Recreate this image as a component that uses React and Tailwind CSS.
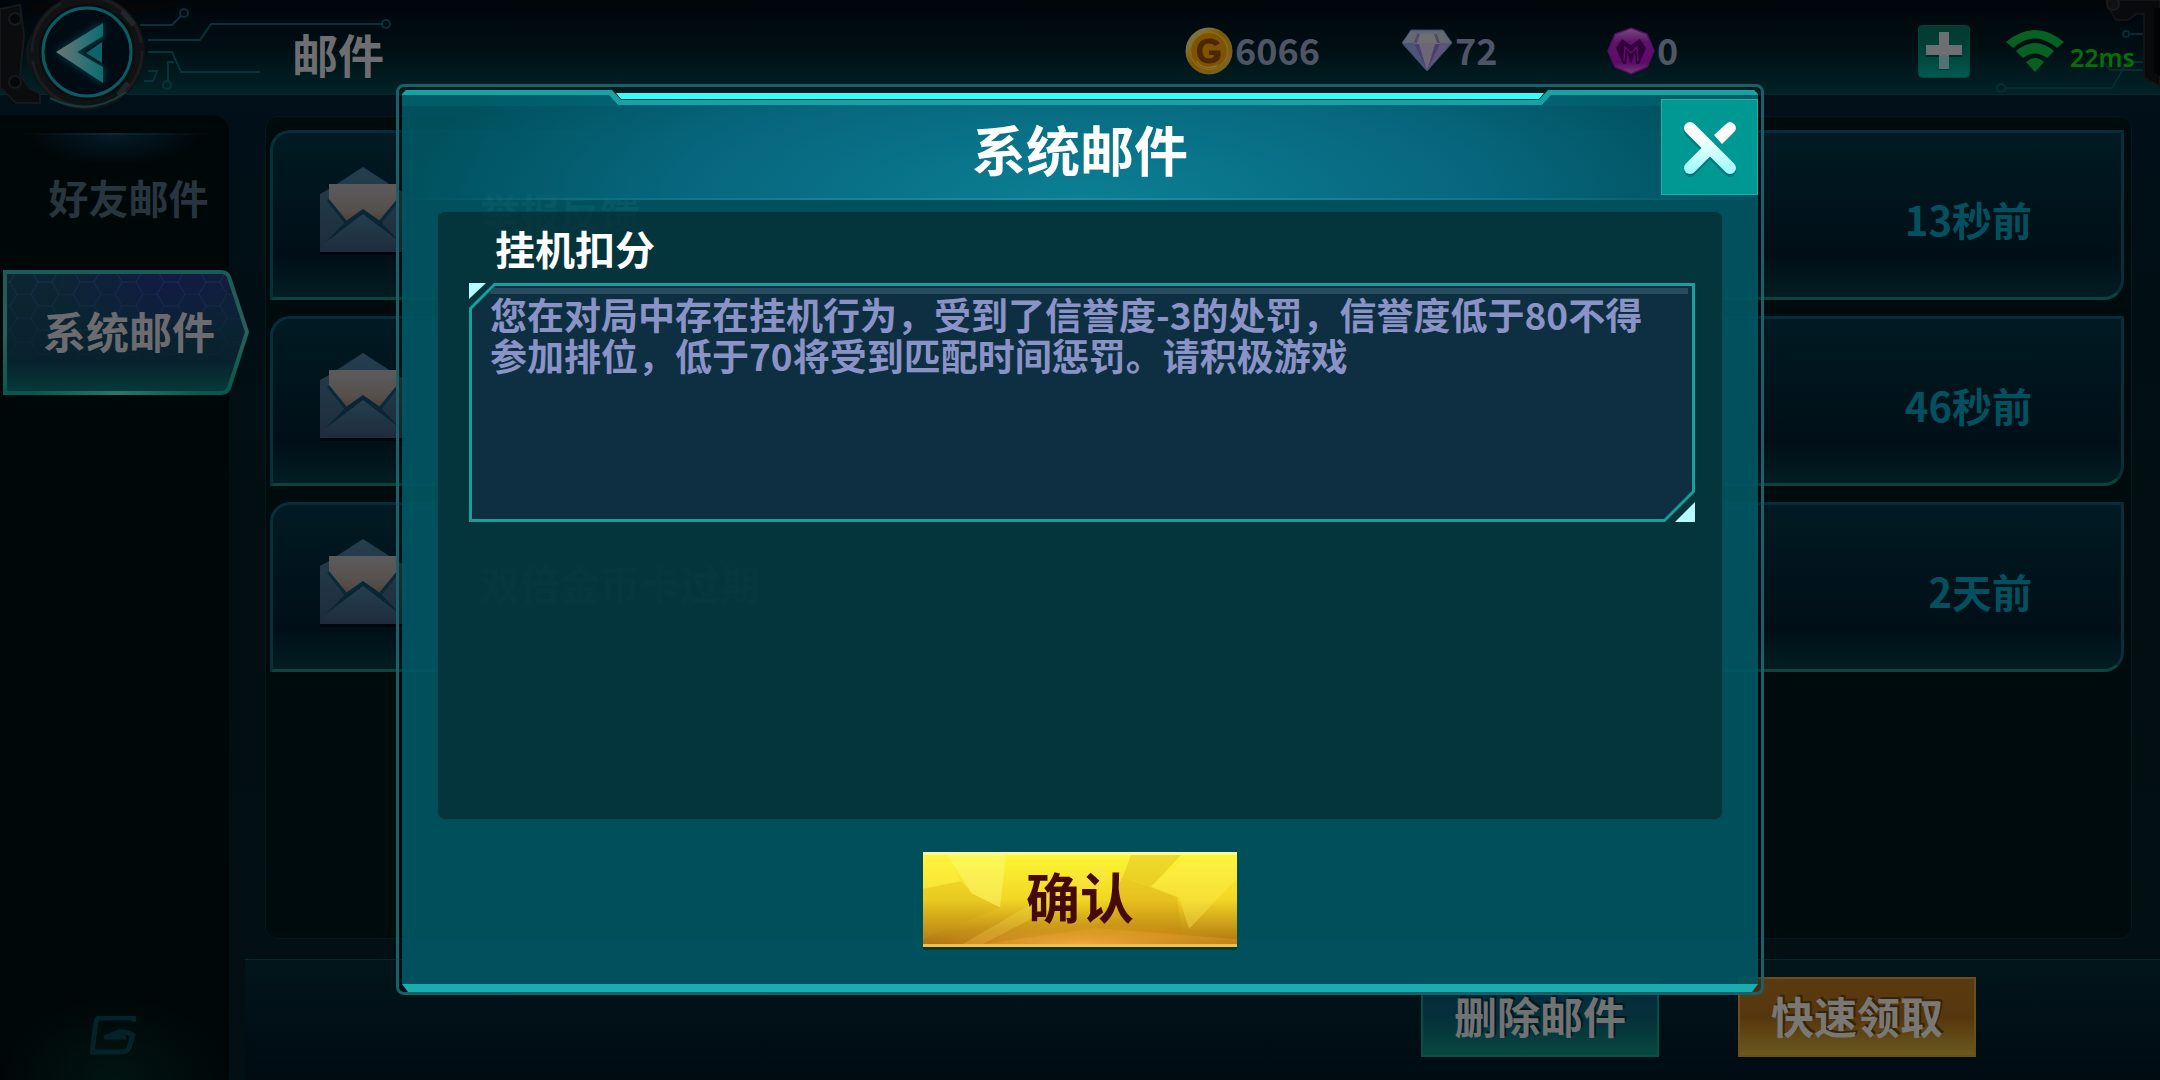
const currencies = [
  { id: "coin", label: "金币", value: "6066", Icon: CoinIcon, width: "w-[216px]" },
  { id: "diamond", label: "钻石", value: "72", Icon: DiamondIcon, width: "w-[206px]" },
  { id: "medal", label: "勋章", value: "0", Icon: MedalIcon, width: "w-[311px]" },
];

const mails = [
  { id: 1, title: "举报反馈", time: "13秒前" },
  { id: 2, title: "", time: "46秒前" },
  { id: 3, title: "双倍金币卡过期", time: "2天前" },
];

function CoinIcon() {
  return (
    <svg width="48" height="48" viewBox="0 0 48 48" aria-hidden="true">
      <defs>
        <linearGradient id="coin-rim" x1="0" y1="0" x2="1" y2="1">
          <stop offset="0" stopColor="#8a6a10" />
          <stop offset=".2" stopColor="#7d7245" />
          <stop offset=".45" stopColor="#7c5605" />
          <stop offset=".85" stopColor="#7a6228" />
          <stop offset="1" stopColor="#5c3d05" />
        </linearGradient>
      </defs>
      <circle cx="24" cy="24" r="23.5" fill="url(#coin-rim)" />
      <circle cx="24" cy="24" r="18.5" fill="#7d5304" stroke="#8d6a10" strokeWidth="1.5" />
      <path d="M35 16.5c-2-3.500-6-5-11-5-8 0-12 5-12 12.500S16 36.500 24 36.500c7 0 11.500-3 11.500-9v-4H24v4.500h5.500c-.5 2.500-2.500 3.500-5.500 3.500-4.500 0-6.500-3-6.500-7.500s2-7.500 6.500-7.500c2.500 0 4.500.8 5.500 2.500z" fill="#4d2605" />
      <path d="M12 34c3 6 12 9 21 4" stroke="#93701c" strokeWidth="1.500" fill="none" />
    </svg>
  );
}

function DiamondIcon() {
  return (
    <svg width="52" height="44" viewBox="0 0 52 44" aria-hidden="true">
      <path d="M10 1h32l9 13-25 28L1 14z" fill="#5b5578" />
      <path d="M10 1h32l9 13H1z" fill="#5e6670" />
      <path d="M10 1l6 5 10-4.500L36 6l6-5 9 13-12 0-3-8-10 0-10 0-3 8H1z" fill="#646a72" />
      <path d="M16 6h20l3 9-13 27L13 15z" fill="#6c6676" />
      <path d="M18 5h16l4 9H14z" fill="#706f70" />
      <path d="M13 15l13 27L18 15zM39 15L26 42l8-27z" fill="#4b3f72" />
      <path d="M1 14h12l13 28z" fill="#4a5578" />
      <path d="M16 5l-3 9 3 0 3-9zM36 5l3 9-3 0-3-9z" fill="#544a6c" />
      <path d="M10 1h32l9 13-25 28L1 14z" fill="none" stroke="#3a4a68" />
    </svg>
  );
}

function MedalIcon() {
  return (
    <svg width="48" height="48" viewBox="0 0 48 48" aria-hidden="true">
      <defs>
        <linearGradient id="medal-fill" x1="0" y1="0" x2="0" y2="1">
          <stop offset="0" stopColor="#75507c" />
          <stop offset=".3" stopColor="#5d1468" />
          <stop offset=".75" stopColor="#5c0a68" />
          <stop offset="1" stopColor="#6d4276" />
        </linearGradient>
      </defs>
      <path d="M24 1l16 6 7 17-7 16-16 7-16-7L1 24 8 7z" fill="url(#medal-fill)" stroke="#5a0a66" strokeWidth="1.500" />
      <path d="M15 12l9 6 9-6 6 9-2 5-5 11h-3l-1-12-4 12-4-12-1 12h-3l-5-11-2-5z" fill="#31003c" />
      <path d="M17 34l1-14 6 6 6-6 1 14" fill="none" stroke="#5a0e66" strokeWidth="1.500" />
    </svg>
  );
}

function WifiIcon() {
  return (
    <svg width="58" height="44" viewBox="0 0 58 44" aria-hidden="true">
      <path d="M0 13Q29 -11 58 13l-7 6Q29 0 7 19z" fill="#066122" />
      <path d="M10 22q19-16 38 0l-7 7q-12-9-24 0z" fill="#066122" />
      <path d="M20 33q9-8 18 0l-9 10z" fill="#066122" />
    </svg>
  );
}

function PlusIcon() {
  return (
    <svg width="38" height="38" viewBox="0 0 38 38" aria-hidden="true">
      <path d="M14 2h10v13h13v10H24v13H14V25H1V15h13z" fill="#022c2a" />
      <path d="M14 0h10v13h13v10H24v14H14V23H1V13h13z" fill="#6d6f72" />
      <path d="M14 23h10v14H14z" fill="#4f7272" />
    </svg>
  );
}

function BackIcon() {
  return (
    <svg width="150" height="112" viewBox="0 0 150 112" aria-hidden="true">
      <defs>
        <linearGradient id="back-arrow" x1="0" y1="0" x2="1" y2="0">
          <stop offset="0" stopColor="#6f7474" />
          <stop offset=".5" stopColor="#3a7375" />
          <stop offset="1" stopColor="#0b6c70" />
        </linearGradient>
        <filter id="back-glow" x="-40%" y="-40%" width="180%" height="180%">
          <feGaussianBlur stdDeviation="4" />
        </filter>
      </defs>
      <path d="M0 10L20 6l4 30-4 40 10 14 10 4v10H16L0 88z" fill="#0a0c0e" stroke="#14191c" strokeWidth="2" />
      <circle cx="15" cy="20" r="6" fill="#05080a" stroke="#14191c" strokeWidth="2" />
      <circle cx="15" cy="83" r="6" fill="#05080a" stroke="#14191c" strokeWidth="2" />
      <path d="M34 32q-16 20 0 44l8-4V36z" fill="#10171b" />
      <circle cx="87" cy="53" r="58" fill="#111214" />
      <circle cx="87" cy="53" r="55" fill="none" stroke="#1a1c1f" strokeWidth="3" strokeDasharray="60 14 90 8" />
      <path d="M122 12l12 14M128 84l-10 12" stroke="#22262a" strokeWidth="5" />
      <path d="M50 99q40 20 76-6" fill="none" stroke="#123c3e" strokeWidth="2" />
      <circle cx="87" cy="53" r="48" fill="#060c10" />
      <circle cx="87" cy="53" r="45" fill="#010b14" />
      <circle cx="87" cy="53" r="44" fill="none" stroke="#0a5b62" strokeWidth="3" />
      <path d="M103 24L56 53l47 31V69L78 53l25-15z" fill="#0b7278" opacity=".6" filter="url(#back-glow)" />
      <path d="M103 24L56 53l47 31V68L77 53l26-16z" fill="url(#back-arrow)" />
      <path d="M102 43v21L86 54z" fill="#0c6468" />
    </svg>
  );
}

function CircuitLeft() {
  return (
    <svg className="absolute left-0 top-0" width="400" height="95" viewBox="0 0 400 95" fill="none" stroke="#07323a" strokeWidth="2" aria-hidden="true">
      <path d="M30 2h150l-8 6-42 6H30z" fill="#040607" stroke="none" />
      <path d="M140 25h32l9-9M148 40h52l11-16h171M148 52h24l9 20h79M174 62h-6v20M148 71h9l-4 10h-9" />
      <circle cx="184" cy="13" r="4" />
      <circle cx="386" cy="24" r="4" />
      <circle cx="167" cy="85" r="4" />
    </svg>
  );
}

function CircuitRight() {
  return (
    <svg className="absolute right-0 top-0" width="170" height="95" viewBox="0 0 170 95" fill="none" stroke="#062c34" strokeWidth="2" aria-hidden="true">
      <path d="M15 88h107l14-24 6-2h22M112 60l8 10h34l12 3" />
      <path d="M140 34h16" />
      <circle cx="11" cy="88" r="4" />
      <circle cx="136" cy="34" r="3" />
      <path d="M116 0h54v86l-16-8V14h-8l-8 6h-12l-6-10z" fill="#090a0c" stroke="#111417" />
      <path d="M164 8v64l6 4V8z" fill="#020304" stroke="none" />
      <circle cx="123" cy="4" r="6" fill="#0e1012" stroke="#181b1d" />
    </svg>
  );
}

function EnvelopeIcon() {
  return (
    <svg width="86" height="88" viewBox="0 0 86 88" className="shrink-0" aria-hidden="true">
      <defs>
        <linearGradient id="env-body" x1="0" y1="0" x2="0" y2="1">
          <stop offset="0" stopColor="#243f4e" />
          <stop offset="1" stopColor="#1e2c3c" />
        </linearGradient>
        <linearGradient id="env-paper" x1="0" y1="0" x2="0" y2="1">
          <stop offset="0" stopColor="#5c5b5c" />
          <stop offset=".7" stopColor="#55504d" />
          <stop offset="1" stopColor="#4d4038" />
        </linearGradient>
      </defs>
      <path d="M0 85h86v3H0z" fill="#00060b" />
      <path d="M43 0l34 22 9 5v58H0V27l9-5z" fill="url(#env-body)" />
      <path d="M9 17h68v18L60 54H26L9 35z" fill="url(#env-paper)" />
      <path d="M9 32l18 22-2 3L7 34zM77 32L59 54l2 3 18-23z" fill="#0a2a38" />
      <path d="M43 42L26 54 5 76l38-28 38 28-21-22z" fill="#0a2534" />
      <path d="M43 47L5 76 0 85h86l-5-9z" fill="url(#env-body)" />
    </svg>
  );
}

function ActiveTabShape() {
  return (
    <svg className="absolute inset-0" width="246" height="125" viewBox="0 0 246 125" aria-hidden="true">
      <defs>
        <linearGradient id="tab-fill" x1="0" y1="0" x2="0" y2="1">
          <stop offset="0" stopColor="#0b2733" />
          <stop offset=".75" stopColor="#08222d" />
          <stop offset="1" stopColor="#063a3a" />
        </linearGradient>
        <radialGradient id="tab-violet" cx=".7" cy=".1" r=".5">
          <stop offset="0" stopColor="#15164a" stopOpacity=".7" />
          <stop offset="1" stopColor="#15164a" stopOpacity="0" />
        </radialGradient>
        <linearGradient id="tab-edge" x1="0" y1="0" x2="0" y2="1">
          <stop offset="0" stopColor="#1d5a58" />
          <stop offset=".5" stopColor="#2c5f59" />
          <stop offset="1" stopColor="#04594c" />
        </linearGradient>
        <linearGradient id="tab-shine" x1="0" y1="0" x2="1" y2="0">
          <stop offset="0" stopColor="#2b7468" stopOpacity="0" />
          <stop offset=".5" stopColor="#2b7468" />
          <stop offset="1" stopColor="#2b7468" stopOpacity="0" />
        </linearGradient>
        <pattern id="tab-hex" width="42" height="24" patternUnits="userSpaceOnUse">
          <path d="M0 12h7l7-12h14l7 12h7M7 12l7 12M35 12l-7 12" fill="none" stroke="#1a2f55" strokeWidth="1" />
        </pattern>
        <linearGradient id="hex-fade" x1="0" y1="0" x2="0" y2="1">
          <stop offset="0" stopColor="#fff" />
          <stop offset=".8" stopColor="#000" />
        </linearGradient>
        <mask id="hex-mask">
          <rect width="246" height="125" fill="url(#hex-fade)" />
        </mask>
      </defs>
      <path d="M2 2h216q6 0 8 5l18 55-18 56q-2 5-8 5H2z" fill="url(#tab-fill)" />
      <path d="M2 2h216q6 0 8 5l18 55-18 56q-2 5-8 5H2z" fill="url(#tab-violet)" />
      <path d="M2 2h216l8 5 18 55-20 56H2z" fill="url(#tab-hex)" mask="url(#hex-mask)" />
      <path d="M2 2h216q6 0 8 5l18 55-18 56q-2 5-8 5H2z" fill="none" stroke="url(#tab-edge)" strokeWidth="4" />
      <rect x="30" y="121" width="170" height="4" fill="url(#tab-shine)" />
    </svg>
  );
}

function StudioMark() {
  return (
    <svg width="46" height="40" viewBox="0 0 46 40" fill="none" aria-hidden="true">
      <path d="M44 6V2H10Q7 2 6 6L2 36h30q5 0 7-4l4-13q-6-4-14-3l-13 5h20" stroke="#05222b" strokeWidth="5" strokeLinejoin="round" />
    </svg>
  );
}

function CloseIcon() {
  return (
    <svg width="56" height="58" viewBox="0 0 56 58" aria-hidden="true">
      <defs>
        <linearGradient id="close-fill" gradientUnits="userSpaceOnUse" x1="0" y1="0" x2="0" y2="54">
          <stop offset=".3" stopColor="#ffffff" />
          <stop offset="1" stopColor="#97fbff" />
        </linearGradient>
      </defs>
      <path d="M8 11l40 40M27 32L8 51" stroke="#04777b" strokeWidth="12" strokeLinecap="round" fill="none" />
      <path d="M27 29L8 48" stroke="url(#close-fill)" strokeWidth="12" strokeLinecap="round" />
      <path d="M8 8l40 40" stroke="url(#close-fill)" strokeWidth="12" strokeLinecap="round" />
      <path d="M44 4q4-4 8 0t0 8L40 24l-8-9z" fill="#fff" />
    </svg>
  );
}

function ConfirmFacets() {
  return (
    <svg className="absolute inset-0 h-full w-full" viewBox="0 0 314 95" preserveAspectRatio="none" aria-hidden="true">
      <defs>
        <radialGradient id="confirm-glow" cx=".5" cy="1" r=".5">
          <stop offset="0" stopColor="#ffb347" stopOpacity=".8" />
          <stop offset="1" stopColor="#e89a2a" stopOpacity="0" />
        </radialGradient>
      </defs>
      <path d="M0 0h24l14 28L0 36z" fill="#fff04a" opacity=".4" />
      <path d="M24 0h59l-6 56-28-15z" fill="#ffff8a" opacity=".4" />
      <path d="M0 36l38-8 11 13 28 15-77 34z" fill="#c99a14" opacity=".2" />
      <path d="M40 95L176 10l12 14L60 95z" fill="#ffe25a" opacity=".25" />
      <path d="M200 23l54 22 6 45-88-10z" fill="#c9850f" opacity=".25" />
      <path d="M208 0h50l-30 34-28-11z" fill="#d6b51c" opacity=".4" />
      <path d="M260 5h54v20l-48 54-10-34-28-12z" fill="#fff25a" opacity=".35" />
      <path d="M172 78l142 12v5H60z" fill="#e8a42a" opacity=".35" />
      <rect y="50" width="314" height="45" fill="url(#confirm-glow)" />
    </svg>
  );
}

function Header() {
  return (
    <header className="relative flex h-[95px] items-center border-b border-[#05262b] bg-linear-to-b from-[#00060a] via-[#000e13] to-[#022327] pr-6">
      <CircuitLeft />
      <CircuitRight />
      <button type="button" aria-label="返回" className="relative -mb-4 w-[150px]">
        <BackIcon />
      </button>
      <h1 className="relative ml-[142px] pb-1 pt-4 text-[46px] leading-[60px] text-[#6d6e72]">邮件</h1>

      <div className="relative ml-auto flex items-center pt-2">
        {currencies.map(({ id, label, value, Icon, width }) => (
          <div key={id} className={`flex items-center gap-[2px] ${width}`} title={label}>
            <Icon />
            <span className="pb-1 text-[36px] leading-[44px] text-[#4e5666]">{value}</span>
          </div>
        ))}
        <button
          type="button"
          aria-label="添加"
          className="flex h-[53px] w-[52px] items-center justify-center rounded-sm border border-[#054438] bg-linear-to-b from-[#023a2e] via-[#024238] to-[#015a50]"
        >
          <PlusIcon />
        </button>
        <div className="ml-9 flex items-center gap-[6px]">
          <WifiIcon />
          <span className="w-[66px] pt-3 font-['Noto_Sans'] text-[25px] font-semibold leading-[28px] text-[#067006]">22ms</span>
        </div>
      </div>
    </header>
  );
}

function Sidebar() {
  return (
    <nav className="mt-5 flex w-[229px] shrink-0 flex-col rounded-tr-2xl bg-[#000709]">
      <button type="button" className="relative flex h-[155px] items-center justify-center pl-7 pt-2 text-[40px] text-[#27353f]">
        <span className="absolute left-5 right-5 top-[18px] h-[2px] bg-linear-to-r from-transparent via-[#0c2a36] to-transparent" />
        <span className="absolute left-5 right-5 top-5 h-8 bg-[radial-gradient(ellipse_at_top,#041b28,transparent_65%)]" />
        好友邮件
      </button>
      <button type="button" className="relative ml-[3px] flex h-[125px] w-[246px] items-center pb-1 pl-10 text-[43px] text-[#6c6c70]">
        <ActiveTabShape />
        <span className="relative">系统邮件</span>
      </button>
      <div className="mt-auto flex justify-center bg-[radial-gradient(ellipse_at_bottom,#011410,transparent_70%)] pb-6 pr-1 pt-5">
        <StudioMark />
      </div>
    </nav>
  );
}

function MailRow({ mail }) {
  return (
    <li className="flex h-[170px] items-center rounded-br-[20px] rounded-tl-[20px] border-[3px] border-b-[#08453d] border-l-[#063038] border-r-[#0a2d38] border-t-[#0a2c3a] bg-linear-to-b from-[#011a23] via-[#000f17] via-75% to-[#021d22] pl-[47px] pr-[89px]">
      <div className="pb-2">
        <EnvelopeIcon />
      </div>
      <span className="ml-[74px] pb-2 text-[40px] leading-9 text-[#7c8c94]">{mail.title}</span>
      <time className="ml-auto pt-2 text-[40px] leading-10 text-[#04505e]">{mail.time}</time>
    </li>
  );
}

function Footer() {
  return (
    <footer className="ml-4 mt-5 flex h-[121px] justify-end gap-[79px] border-t border-[#08262b] bg-linear-to-b from-[#02161b] to-[#000b12] pr-[184px] pt-[17px]">
      <button
        type="button"
        className="h-20 w-[238px] border-2 border-[#075048] bg-linear-to-b from-[#042b3a] via-[#05303a] to-[#07473f] pb-1 text-[43px] leading-none text-[#707274] [text-shadow:2px_-2px_0_#02181d]"
      >
        删除邮件
      </button>
      <button
        type="button"
        className="h-20 w-[238px] border-2 border-[#6a4f1b] bg-linear-to-b from-[#5a3a10] via-[#56360c] to-[#6a5a20] pb-1 text-[43px] leading-none text-[#7a7874] [text-shadow:2px_-2px_0_#36240a]"
      >
        快速领取
      </button>
    </footer>
  );
}

function MessageBox({ children }) {
  return (
    <div className="relative mt-[15px]">
      <span className="absolute left-0 top-0 h-4 w-[17px] bg-[#b5fbff] [clip-path:polygon(0_0,100%_0,0_100%)]" />
      <span className="absolute bottom-0 right-0 h-5 w-5 bg-[#b5fbff] [clip-path:polygon(100%_0,100%_100%,0_100%)]" />
      <div className="bg-[#18a09c] p-[3px] [clip-path:polygon(25px_0,100%_0,100%_calc(100%-30px),calc(100%-30px)_100%,0_100%,0_25px)]">
        <div className="min-h-[233px] bg-[#0e2f41] pt-[2px] [clip-path:polygon(23px_0,100%_0,100%_calc(100%-28px),calc(100%-28px)_100%,0_100%,0_23px)]">
          <div className="ml-[18px] mr-1 h-[6px] bg-[#294b5e]" />
          <p className="pl-[18px] pr-6 text-[37px] leading-[41px] text-[#8a93c6]">{children}</p>
        </div>
      </div>
    </div>
  );
}

function MailDialog() {
  return (
    <div className="absolute inset-0 flex items-start justify-center pt-[84px]">
      <div
        role="dialog"
        aria-labelledby="dialog-title"
        className="w-full max-w-[1368px] rounded-lg border-[3px] border-[#1b6068] bg-black/20 px-[3px] pt-[3px]"
      >
        <div className="grid">
          {/* bright edge that shows above and below the body */}
          <div className="col-start-1 row-start-1 bg-[linear-gradient(to_bottom,#18a2a5_16px,transparent_16px,transparent_calc(100%-8px),#18adae_calc(100%-8px))] [clip-path:polygon(4px_0,210px_0,219px_10px,calc(100%-219px)_10px,calc(100%-210px)_0,calc(100%-4px)_0,100%_4px,100%_calc(100%-8px),calc(100%-6px)_100%,6px_100%,0_calc(100%-8px),0_4px)]" />
          <div className="col-start-1 row-start-1 mx-[214px] mt-[3px] h-[6px] bg-[#30fffb] [clip-path:polygon(0_0,100%_0,calc(100%-5px)_100%,5px_100%)]" />

          <div className="col-start-1 row-start-1 mb-2 mt-[5px] flex flex-col bg-[#005663]/93 pb-[37px] [clip-path:polygon(0_0,207px_0,216px_10px,calc(100%-216px)_10px,calc(100%-207px)_0,100%_0,100%_100%,0_100%)]">
            <div className="grid grid-cols-[97px_1fr_97px] items-start bg-[radial-gradient(ellipse_50%_200%_at_50%_100%,#0b7f94,#07667d_60%,transparent)] pt-1">
              <h2 id="dialog-title" className="col-start-2 pb-[15px] pt-[14px] text-center text-[54px] leading-[72px] text-white">
                系统邮件
              </h2>
              <button
                type="button"
                aria-label="关闭"
                className="flex h-24 items-center justify-center border border-[#18b3ac] bg-[#009893] pt-1"
              >
                <CloseIcon />
              </button>
            </div>
            <div className="-mt-[2px] h-[2px] bg-linear-to-r from-transparent via-[#1f8b9b] to-transparent" />

            <div className="mx-[35px] mt-[11px] min-h-[609px] rounded-lg border border-[#0b4a50] bg-[#072226]/60 pl-[31px] pr-[27px] pt-4">
              <h3 className="pl-[26px] text-[40px] leading-10 text-white">挂机扣分</h3>
              <MessageBox>
                您在对局中存在挂机行为，受到了信誉度-3的处罚，信誉度低于80不得参加排位，低于70将受到匹配时间惩罚。请积极游戏
              </MessageBox>
            </div>

            <button
              type="button"
              className="relative mx-auto mt-8 h-[95px] w-[314px] border-y-[3px] border-b-[#f3c04c] border-t-[#fff59a] bg-linear-to-b from-[#fdf634] via-[#f2d624] to-[#ad7410] pb-2 text-[54px] leading-none text-[#450a08] shadow-[0_3px_0_#063a30]"
            >
              <ConfirmFacets />
              <span className="relative">确认</span>
            </button>
          </div>
        </div>
      </div>
    </div>
  );
}

export default function App() {
  return (
    <div className="relative flex min-h-screen flex-col overflow-hidden bg-linear-to-b from-[#00101a] via-[#020e11] to-[#020f14] font-['Noto_Sans_CJK_SC',sans-serif] font-bold">
      <Header />
      <div className="flex flex-1">
        <Sidebar />
        <main className="flex flex-1 flex-col">
          <ul className="ml-9 mr-7 mt-[21px] flex flex-1 flex-col gap-4 rounded-xl border border-[#03191f] bg-[#000b0e] pl-1 pr-[7px] pt-[13px]">
            {mails.map((mail) => (
              <MailRow key={mail.id} mail={mail} />
            ))}
          </ul>
          <Footer />
        </main>
      </div>
      <MailDialog />
    </div>
  );
}
